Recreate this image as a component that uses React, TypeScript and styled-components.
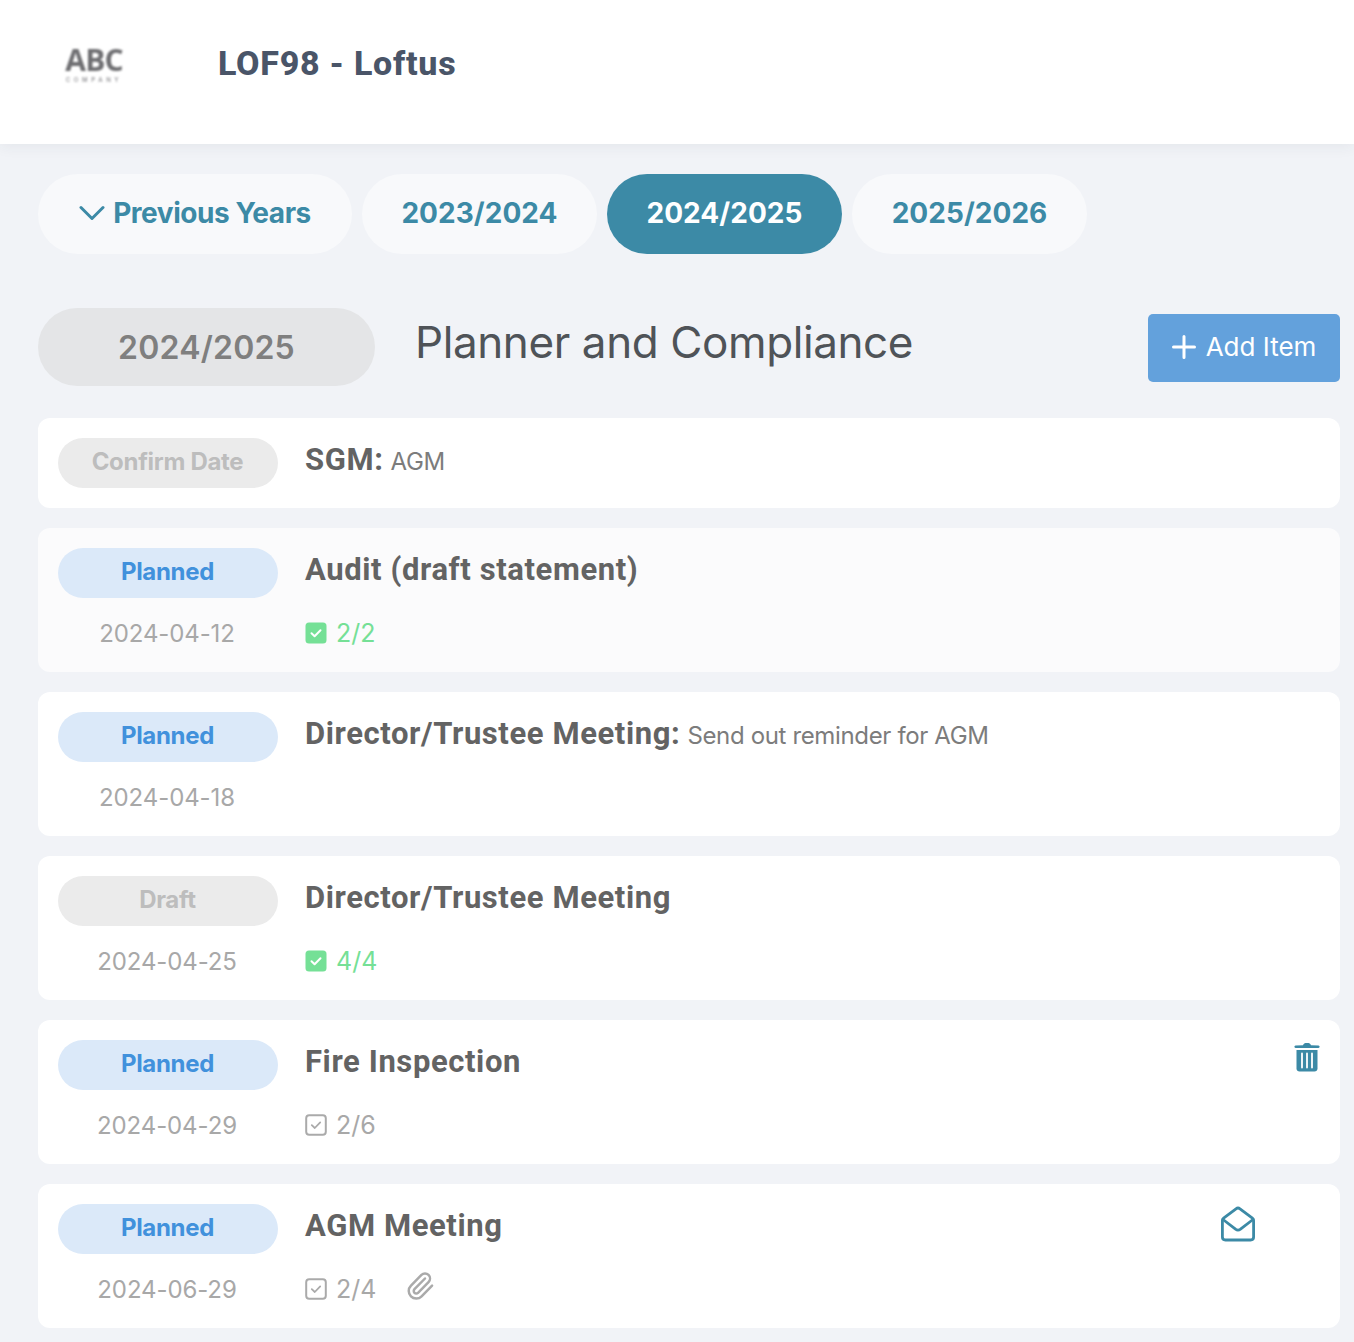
import React from 'react'
import styled, { createGlobalStyle } from 'styled-components'
import { Paperclip } from 'lucide-react'

type Status = 'planned' | 'draft'

type PlannerItem = {
  status: string;
  kind: Status;
  title: string;
  note?: string;
  date?: string;
  tasks?: string;
  done?: boolean;
  attachment?: boolean;
  action?: 'trash' | 'mail';
  muted?: boolean;
}

const items: PlannerItem[] = [
  { status: 'Confirm Date', kind: 'draft', title: 'SGM:', note: 'AGM' },
  { status: 'Planned', kind: 'planned', title: 'Audit (draft statement)', date: '2024-04-12', tasks: '2/2', done: true, muted: true },
  { status: 'Planned', kind: 'planned', title: 'Director/Trustee Meeting:', note: 'Send out reminder for AGM', date: '2024-04-18' },
  { status: 'Draft', kind: 'draft', title: 'Director/Trustee Meeting', date: '2024-04-25', tasks: '4/4', done: true },
  { status: 'Planned', kind: 'planned', title: 'Fire Inspection', date: '2024-04-29', tasks: '2/6', action: 'trash' },
  { status: 'Planned', kind: 'planned', title: 'AGM Meeting', date: '2024-06-29', tasks: '2/4', attachment: true, action: 'mail' },
]

const TaskIcon = ({ done }: { done?: boolean }) => done ? (
  <svg width="22" height="22" viewBox="0 0 22 22">
    <rect x="0.5" y="0.5" width="21" height="21" rx="3.5" fill="#75e096" />
    <path d="M6.5 11.200l3.100 3 5.900-6" fill="none" stroke="#fff" strokeWidth="2" strokeLinecap="round" strokeLinejoin="round" />
  </svg>
) : (
  <svg width="22" height="22" viewBox="0 0 22 22">
    <rect x="1.200" y="1.200" width="19.600" height="19.600" rx="3" fill="none" stroke="#aaa" strokeWidth="2" />
    <path d="M6.800 11.200l3 2.800 5.400-5.600" fill="none" stroke="#aaa" strokeWidth="1.800" strokeLinecap="round" strokeLinejoin="round" />
  </svg>
)

const ChevronIcon = () => (
  <svg width="26" height="16" viewBox="0 0 26 16" fill="none" stroke="currentColor" strokeWidth="3" strokeLinecap="round" strokeLinejoin="round">
    <path d="M2 2.500l11 11 11-11" />
  </svg>
)

const PlusIcon = () => (
  <svg width="24" height="24" viewBox="0 0 24 24" fill="none" stroke="currentColor" strokeWidth="3" strokeLinecap="round">
    <path d="M12 1.500v21M1.500 12h21" />
  </svg>
)

const TrashIcon = () => (
  <svg width="26" height="30" viewBox="0 0 26 30">
    <path d="M9 3.200C9.500 1.600 10.600 1 13 1s3.500.6 4 2.200l7.500.3c1.500.1 1.500 2.500 0 2.500H1.500C0 6 0 3.600 1.500 3.500z" fill="#3c8aa6" />
    <path d="M2.500 8h21v18.500c0 1.900-1.300 3-3 3h-15c-1.700 0-3-1.100-3-3z" fill="#3c8aa6" />
    <path d="M8 11.500v14M13 11.500v14M18 11.500v14" stroke="#fff" strokeWidth="1.800" strokeLinecap="round" />
  </svg>
)

const MailOpenIcon = () => (
  <svg width="36" height="36" viewBox="0 0 36 36" fill="none" stroke="#3c8aa6" strokeWidth="2.800" strokeLinecap="round" strokeLinejoin="round">
    <path d="M2.400 14.500c0-1 .4-1.700 1.200-2.300L16 2.800c1.200-.9 2.800-.9 4 0l12.400 9.400c.8.600 1.200 1.300 1.200 2.300V31c0 1.800-1.200 3-3 3H5.400c-1.800 0-3-1.200-3-3z" />
    <path d="M3 13.500l12.500 9.700c1.500 1.100 3.500 1.100 5 0L33 13.500" />
  </svg>
)

const PlannerCard = ({ item }: { item: PlannerItem }) => (
  <Card $muted={item.muted}>
    <StatusColumn>
      <StatusPill $kind={item.kind}>{item.status}</StatusPill>
      {item.date && <DateText>{item.date}</DateText>}
    </StatusColumn>
    <Details>
      <TitleRow>
        <ItemTitle>{item.title}</ItemTitle>
        {item.note && <ItemNote>{item.note}</ItemNote>}
      </TitleRow>
      {item.tasks && (
        <MetaRow>
          <TaskIcon done={item.done} />
          <TaskCount $done={item.done}>{item.tasks}</TaskCount>
          {item.attachment && (
            <ClipWrap>
              <Paperclip size={30} color="#aaa" strokeWidth={2} />
            </ClipWrap>
          )}
        </MetaRow>
      )}
    </Details>
    {item.action === 'trash' && <TrashWrap><TrashIcon /></TrashWrap>}
    {item.action === 'mail' && <MailWrap><MailOpenIcon /></MailWrap>}
  </Card>
)

const App: React.FC = () => {
  return (
    <>
      <GlobalStyle />
      <Header>
        <Logo>
          <LogoMark>ABC</LogoMark>
          <LogoSub>COMPANY</LogoSub>
        </Logo>
        <PropertyName>LOF98 - Loftus</PropertyName>
      </Header>
      <Main>
        <Tabs>
          <Tab $wide>
            <ChevronIcon />
            Previous Years
          </Tab>
          <Tab>2023/2024</Tab>
          <Tab $active>2024/2025</Tab>
          <Tab>2025/2026</Tab>
        </Tabs>
        <HeadingRow>
          <YearBadge>2024/2025</YearBadge>
          <Heading>Planner and Compliance</Heading>
          <AddButton>
            <PlusIcon />
            Add Item
          </AddButton>
        </HeadingRow>
        <CardList>
          {items.map((item, i) => <PlannerCard key={i} item={item} />)}
        </CardList>
      </Main>
    </>
  )
}

export default App

const GlobalStyle = createGlobalStyle`
  * {
    box-sizing: border-box;
  }

  body {
    margin: 0;
    background-color: #f1f3f7;
    font-family: 'Inter', 'Liberation Sans', sans-serif;
  }
`;

const Header = styled.header`
  height: 144px;
  background-color: #fff;
  display: flex;
  align-items: center;
  box-shadow: 0 2px 14px rgba(40, 50, 70, 0.07);
  position: relative;
`;

const Logo = styled.div`
  width: 106px;
  margin-left: 41px;
  margin-bottom: 16px;
  display: flex;
  flex-direction: column;
  align-items: center;
  filter: blur(0.8px);
  color: #6f6f72;
`;

const LogoMark = styled.div`
  font-family: 'Open Sans', sans-serif;
  font-size: 30px;
  line-height: 30px;
  font-weight: 700;
  letter-spacing: -0.9px;
`;

const LogoSub = styled.div`
  margin-top: 1px;
  font-size: 6px;
  line-height: 8px;
  letter-spacing: 3.600px;
  font-weight: 600;
  color: #97979a;
`;

const PropertyName = styled.h1`
  margin: 0 0 18px 71px;
  font-family: 'Roboto', sans-serif;
  font-size: 34px;
  font-weight: 800;
  letter-spacing: 0.75px;
  color: #4a5568;
`;

const Main = styled.main`
  padding: 30px 14px 14px 38px;
`;

const Tabs = styled.nav`
  display: flex;
  gap: 10px;
`;

const Tab = styled.div<{ $active?: boolean; $wide?: boolean }>`
  width: ${({ $wide }) => $wide ? '314px' : '235px'};
  height: 80px;
  border-radius: 40px;
  display: flex;
  align-items: center;
  justify-content: center;
  gap: 8px;
  padding-bottom: 2px;
  font-size: 28px;
  font-weight: 700;
  letter-spacing: ${({ $wide }) => $wide ? '-0.45px' : '0.05px'};
  background-color: ${({ $active }) => $active ? '#3c8aa6' : '#f8f9fb'};
  color: ${({ $active }) => $active ? '#fff' : '#3c8aa6'};
`;

const HeadingRow = styled.div`
  display: flex;
  align-items: center;
  margin-top: 54px;
  height: 78px;
`;

const YearBadge = styled.div`
  width: 337px;
  height: 78px;
  border-radius: 39px;
  background-color: #e4e5e7;
  color: #7f7f7f;
  font-size: 32px;
  font-weight: 600;
  letter-spacing: 0.2px;
  display: flex;
  align-items: center;
  justify-content: center;
`;

const Heading = styled.h2`
  margin: 0 0 10px 40px;
  flex: 1;
  font-size: 44px;
  font-weight: 400;
  color: #4f5358;
  letter-spacing: -0.4px;
`;

const AddButton = styled.button`
  width: 192px;
  height: 68px;
  margin-top: 2px;
  padding: 0 0 3px;
  border: none;
  border-radius: 5px;
  background-color: #63a1dc;
  color: #fff;
  font-family: inherit;
  font-size: 26px;
  font-weight: 400;
  display: flex;
  align-items: center;
  justify-content: center;
  gap: 10px;
`;

const CardList = styled.div`
  margin-top: 32px;
  display: flex;
  flex-direction: column;
  gap: 20px;
`;

const Card = styled.article<{ $muted?: boolean }>`
  min-height: 90px;
  padding: 20px;
  border-radius: 12px;
  background-color: ${({ $muted }) => $muted ? '#fbfbfc' : '#fff'};
  display: flex;
  align-items: flex-start;
`;

const StatusColumn = styled.div`
  width: 220px;
  display: flex;
  flex-direction: column;
  align-items: center;
`;

const StatusPill = styled.div<{ $kind: Status }>`
  width: 220px;
  height: 50px;
  padding: 0 1px 4px 0;
  border-radius: 25px;
  display: flex;
  align-items: center;
  justify-content: center;
  font-size: 24px;
  font-weight: 700;
  letter-spacing: -0.3px;
  background-color: ${({ $kind }) => $kind === 'planned' ? '#dbe9f9' : '#ebebeb'};
  color: ${({ $kind }) => $kind === 'planned' ? '#4191dc' : '#bdbdbd'};
`;

const DateText = styled.div`
  margin: 20px 2px 0 0;
  height: 34px;
  line-height: 32px;
  font-size: 24px;
  letter-spacing: -0.1px;
  color: #a8a8a8;
`;

const Details = styled.div`
  margin-left: 27px;
  flex: 1;
`;

const TitleRow = styled.div`
  height: 42px;
  display: flex;
  align-items: center;
  gap: 7px;
`;

const ItemTitle = styled.span`
  font-family: 'Roboto', sans-serif;
  font-size: 31px;
  font-weight: 700;
  letter-spacing: 0.6px;
  color: #636363;
`;

const ItemNote = styled.span`
  font-size: 24px;
  margin-top: 5px;
  letter-spacing: -0.35px;
  color: #7c7c7c;
`;

const MetaRow = styled.div`
  margin-top: 26px;
  height: 34px;
  display: flex;
  align-items: center;
`;

const TaskCount = styled.span<{ $done?: boolean }>`
  margin-left: 9px;
  font-size: 25px;
  color: ${({ $done }) => $done ? '#75e096' : '#a8a8a8'};
`;

const ClipWrap = styled.span`
  margin: -6px 0 0 29px;
  display: flex;
`;

const TrashWrap = styled.div`
  margin-top: 2px;
  display: flex;
`;

const MailWrap = styled.div`
  margin: 2px 64px 0 0;
  display: flex;
`;
